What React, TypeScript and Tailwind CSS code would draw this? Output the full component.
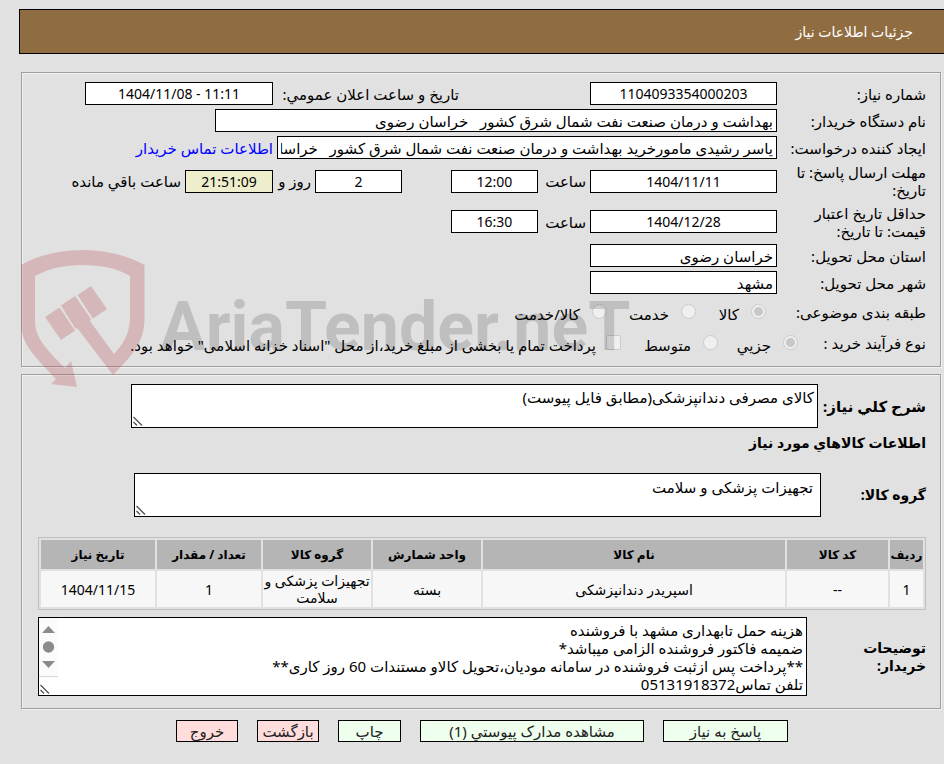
import type { ReactNode } from "react";

const field = "h-[23px] shrink-0 border border-black px-[3px] leading-[18px] text-black outline-none";
const textBox = `${field} bg-white text-[15px]`;
const numberBox = `${field} bg-white text-center text-sm`;
const timerBox = `${field} bg-[#eeeecc] text-center text-sm`;
const panel =
  "ml-[21px] mr-[3px] border border-[#9f9f9f] pr-[14px] shadow-[1px_1px_0_#f1f1f1,inset_1px_1px_0_#f1f1f1]";

function Row({ label, id, children, size = "min-h-[23px]" }: { label: string; id: string; children: ReactNode; size?: string }) {
  return (
    <div className={`flex items-center ${size}`}>
      <label htmlFor={id} className="w-[149px] shrink-0 pl-2">{label}</label>
      {children}
    </div>
  );
}

function Choice({ type, name, text, checked = false, gap }: { type: "radio" | "checkbox"; name: string; text: string; checked?: boolean; gap: string }) {
  const shape =
    type === "radio"
      ? "rounded-full checked:bg-[radial-gradient(circle,#c8c8c8_0_4px,#efefef_5px)]"
      : "rounded-[2px]";
  return (
    <label className={`flex shrink-0 items-center whitespace-nowrap ${gap}`}>
      <input
        type={type}
        name={name}
        defaultChecked={checked}
        disabled
        className={`size-[15px] shrink-0 appearance-none border border-[#cbcbcb] bg-[#efefef] ${shape}`}
      />
      <span className="mt-1">{text}</span>
    </label>
  );
}

function Grip() {
  return (
    <svg className="pointer-events-none absolute bottom-[2px] left-[2px]" width="10" height="10" viewBox="0 0 10 10" stroke="#555" strokeWidth="1.4">
      <path d="M0.5 1 L9 9.5 M0.5 6 L4 9.5" fill="none" />
    </svg>
  );
}

function Area({ id, value, size, pad }: { id: string; value: string; size: string; pad: string }) {
  return (
    <div className={`relative ${size}`}>
      <textarea
        id={id}
        defaultValue={value}
        readOnly
        className={`block h-full w-full resize-none overflow-hidden border border-black bg-white text-[15px] leading-[18px] outline-none ${pad}`}
      />
      <Grip />
    </div>
  );
}

function Watermark() {
  return (
    <div className="pointer-events-none absolute left-[20px] top-[249px] flex" dir="ltr" aria-hidden="true">
      <svg width="126" height="139" viewBox="20 249 126 139" fill="#b53d45" fillOpacity="0.25">
        <path d="M21 265 Q48 250 83 250 Q117 250 144.500 265 V317 C144.500 340 136 352 113 375 L78 329 L75 328 L61 305.500 L75 296 L91 319 L90 321 L114 354 C126 341 130 331 130 315 V276 Q112 265 82 265 Q54 265 35 276 V320 C35 337 44 347 65 368 L71 361 L77 387 L51 384 L56 379 C30 352 21 342 21 322 Z" />
        <path d="M59.500 307.500 L45 317 L61 340 L75 330.500 Z" />
        <path d="M91 286 L77.500 295 L93 318.500 L107 309 Z" />
      </svg>
      <span className="ml-[14px] mt-[28px] whitespace-nowrap font-['Roboto','Liberation_Sans',sans-serif] text-[68px] font-bold leading-[100px] text-black/15">
        AriaTender.neT
      </span>
    </div>
  );
}

const columns = [
  { title: "ردیف", value: "1", width: "w-[33px]" },
  { title: "کد کالا", value: "--", width: "w-[101px]" },
  { title: "نام کالا", value: "اسپریدر دندانپزشکی", width: "" },
  { title: "واحد شمارش", value: "بسته", width: "w-[108px]" },
  { title: "گروه کالا", value: "تجهیزات پزشکی و سلامت", width: "w-[108px]" },
  { title: "تعداد / مقدار", value: "1", width: "w-[104px]" },
  { title: "تاریخ نیاز", value: "1404/11/15", width: "w-[114px]" },
];

const actions = [
  { text: "پاسخ به نیاز", style: "w-[125px] bg-[#eeffee]" },
  { text: "مشاهده مدارک پیوستي (1)", style: "w-[224px] bg-[#eeffee]" },
  { text: "چاپ", style: "w-[63px] bg-[#eeffee]" },
  { text: "بازگشت", style: "w-[62px] bg-[#ffdddd]" },
  { text: "خروج", style: "w-[62px] bg-[#ffdddd]" },
];

const notes =
  "هزینه حمل تابهداری مشهد با فروشنده\nضمیمه فاکتور فروشنده الزامی میباشد*\n**پرداخت پس ازثبت فروشنده در سامانه مودیان،تحویل کالاو مستندات 60 روز کاری**\nتلفن تماس05131918372";

export default function App() {
  return (
    <div dir="rtl" className="relative min-h-screen bg-[#e1e1e1] pt-[9px] font-['Noto_Sans','DejaVu_Sans',sans-serif] text-[15px] leading-[18px] text-black">
      <header className="ml-[19px] flex h-[45px] items-center border border-r-0 border-black bg-[#906d41] pr-[31px] text-sm text-white">
        <h1>جزئیات اطلاعات نیاز</h1>
      </header>

      <section className={`${panel} mt-[18px] flex flex-col gap-1 pb-[10px] pt-[9px]`}>
        <Row label="شماره نیاز:" id="number">
          <input id="number" readOnly defaultValue="1104093354000203" className={`${numberBox} w-[187px]`} />
          <label htmlFor="announced" className="mr-[131px] w-[186px] shrink-0 whitespace-nowrap">تاریخ و ساعت اعلان عمومي:</label>
          <input id="announced" readOnly defaultValue="1404/11/08 - 11:11" dir="ltr" className={`${numberBox} w-[188px]`} />
        </Row>
        <Row label="نام دستگاه خریدار:" id="org">
          <input id="org" readOnly defaultValue={"بهداشت و درمان صنعت نفت شمال شرق کشور\u00a0\u00a0 خراسان رضوی"} className={`${textBox} w-[562px]`} />
        </Row>
        <Row label="ایجاد کننده درخواست:" id="creator">
          <input id="creator" readOnly defaultValue={"یاسر رشیدی مامورخرید بهداشت و درمان صنعت نفت شمال شرق کشور\u00a0\u00a0 خراسان رضوی"} className={`${textBox} w-[500px]`} />
          <a href="#contact" className="mr-1 whitespace-nowrap text-[#0000ff]">اطلاعات تماس خریدار</a>
        </Row>
        <Row label="مهلت ارسال پاسخ: تا تاریخ:" id="deadline">
          <input id="deadline" readOnly defaultValue="1404/11/11" className={`${numberBox} w-[187px]`} />
          <label htmlFor="deadline-hour" className="w-[52px] shrink-0 pr-1">ساعت</label>
          <input id="deadline-hour" readOnly defaultValue="12:00" className={`${numberBox} w-[87px]`} />
          <input id="days" aria-label="روز" readOnly defaultValue="2" className={`${numberBox} mr-[49px] w-[87px]`} />
          <label htmlFor="days" className="w-[42px] shrink-0 pr-1">روز و</label>
          <input id="left" readOnly defaultValue="21:51:09" className={`${timerBox} w-[88px]`} />
          <label htmlFor="left" className="mr-1 whitespace-nowrap">ساعت باقي مانده</label>
        </Row>
        <Row label="حداقل تاریخ اعتبار قیمت: تا تاریخ:" id="valid" size="min-h-[37px]">
          <input id="valid" readOnly defaultValue="1404/12/28" className={`${numberBox} w-[187px]`} />
          <label htmlFor="valid-hour" className="w-[52px] shrink-0 pr-1">ساعت</label>
          <input id="valid-hour" readOnly defaultValue="16:30" className={`${numberBox} w-[87px]`} />
        </Row>
        <Row label="استان محل تحویل:" id="province">
          <input id="province" readOnly defaultValue="خراسان رضوی" className={`${textBox} w-[187px]`} />
        </Row>
        <Row label="شهر محل تحویل:" id="city">
          <input id="city" readOnly defaultValue="مشهد" className={`${textBox} w-[187px]`} />
        </Row>
        <div className="flex h-[27px] items-center">
          <span className="w-[160px] shrink-0">طبقه بندی موضوعی:</span>
          <Choice type="radio" name="subject" text="کالا" checked gap="w-[70px] gap-3" />
          <Choice type="radio" name="subject" text="خدمت" gap="w-[89px] gap-3" />
          <Choice type="radio" name="subject" text="کالا/خدمت" gap="gap-3" />
        </div>
        <div className="flex h-[27px] items-center">
          <span className="w-[128px] shrink-0">نوع فرآیند خرید :</span>
          <Choice type="radio" name="process" text="جزیي" checked gap="w-[80px] gap-3" />
          <Choice type="radio" name="process" text="متوسط" gap="w-[97px] gap-3" />
          <Choice type="checkbox" name="treasury" text='پرداخت تمام یا بخشی از مبلغ خرید،از محل "اسناد خزانه اسلامی" خواهد بود.' gap="gap-[10px]" />
        </div>
      </section>

      <section className={`${panel} mt-[7px] pb-3 pl-4 pt-[9px]`}>
        <div className="flex items-center">
          <label htmlFor="summary" className="w-[108px] shrink-0 whitespace-nowrap font-bold">شرح کلي نیاز:</label>
          <Area id="summary" value="کالای مصرفی دندانپزشکی(مطابق فایل پیوست)" size="ml-[93px] h-[44px] flex-1" pad="px-[3px] pt-[3px]" />
        </div>
        <h2 className="mt-[6px] text-sm font-bold leading-[18px]">اطلاعات کالاهاي مورد نیاز</h2>
        <div className="mt-[21px] flex items-center">
          <label htmlFor="group" className="w-[105px] shrink-0 text-sm font-bold">گروه کالا:</label>
          <Area id="group" value="تجهیزات پزشکی و سلامت" size="ml-[96px] h-[44px] flex-1" pad="px-[7px] pt-[4px]" />
        </div>
        <table className="mt-[20px] w-full table-fixed border-separate border-spacing-[2px] border border-[#bfbfbf] text-center text-sm leading-[17px]">
          <thead>
            <tr className="h-[29px] bg-[#b5b5b5] text-xs">
              {columns.map((c) => (
                <th key={c.title} scope="col" className={`whitespace-nowrap p-0 font-bold ${c.width}`}>{c.title}</th>
              ))}
            </tr>
          </thead>
          <tbody>
            <tr className="h-[36px] bg-[#f7f7f7]">
              {columns.map((c) => (
                <td key={c.title} className="p-0">{c.value}</td>
              ))}
            </tr>
          </tbody>
        </table>
        <div className="mt-[7px] flex items-center">
          <label htmlFor="notes" className="w-[119px] shrink-0 pl-8 text-sm font-bold leading-[18px]">توضیحات خریدار:</label>
          <div className="relative flex-1">
            <Area id="notes" value={notes} size="h-[79px]" pad="px-[3px] pt-[3px]" />
            <svg className="pointer-events-none absolute left-px top-px" width="19" height="60" viewBox="0 0 19 60" fill="#8b8b8b">
              <path d="M0 0 H19 V60 H0 Z" fill="#fbfbfb" />
              <path d="M3 15 L9.500 8 L16 15 Z" />
              <circle cx="9.500" cy="29" r="5.700" />
              <path d="M3 43 L9.500 50 L16 43 Z" />
              <path d="M0 58 H19 V59 H0 Z" fill="#d9d9d9" />
            </svg>
          </div>
        </div>
      </section>

      <div className="flex gap-[19px] pr-[156px] pt-[11px]">
        {actions.map((a) => (
          <button key={a.text} type="button" className={`h-[22px] shrink-0 whitespace-nowrap border border-black text-[#222] ${a.style}`}>
            {a.text}
          </button>
        ))}
      </div>

      <Watermark />
    </div>
  );
}
